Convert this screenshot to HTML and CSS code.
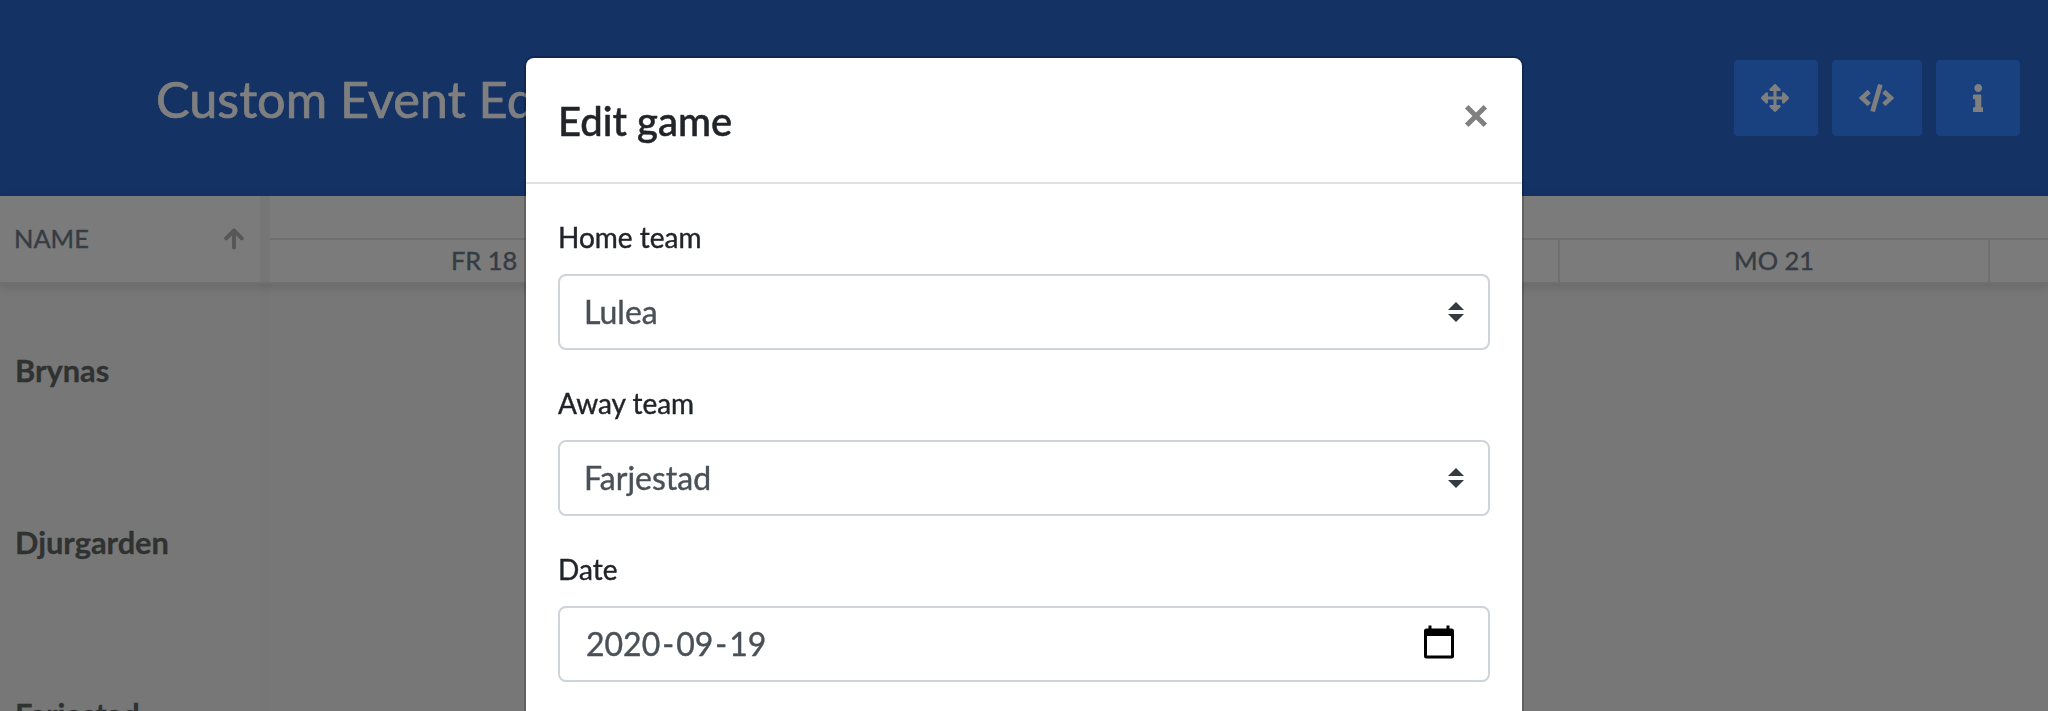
FILE: index.html
```html
<!DOCTYPE html>
<html lang="en">
<head>
<meta charset="utf-8">
<title>Custom Event Editor</title>
<link rel="stylesheet" href="styles.css">
</head>
<body>
<div class="page">
  <header class="topbar">
    <h1 class="topbar-title">Custom Event Editor</h1>
    <div class="tools">
      <button class="tool" aria-label="Fullscreen"><svg width="28" height="28" viewBox="0 0 512 512"><path d="M352.201 425.775l-79.196 79.196c-9.373 9.373-24.568 9.373-33.941 0l-79.196-79.196c-15.119-15.119-4.411-40.971 16.971-40.970h51.162L228 284H127.196v51.162c0 21.382-25.851 32.090-40.971 16.971L7.029 272.937c-9.373-9.373-9.373-24.569 0-33.941L86.225 159.800c15.119-15.119 40.971-4.411 40.971 16.971V228H228V127.196h-51.230c-21.381 0-32.090-25.851-16.971-40.971l79.196-79.196c9.373-9.373 24.568-9.373 33.941 0l79.196 79.196c15.119 15.119 4.411 40.971-16.971 40.971h-51.162V228h100.804v-51.162c0-21.382 25.851-32.090 40.970-16.971l79.196 79.196c9.373 9.373 9.373 24.569 0 33.941L425.773 352.200c-15.119 15.119-40.971 4.411-40.970-16.971V284H284v100.804h51.230c21.382 0 32.090 25.851 16.971 40.971z"/></svg></button>
      <button class="tool tool-wide" aria-label="Code"><svg width="35" height="28" viewBox="0 0 640 512"><path d="M278.9 511.5l-61-17.7c-6.4-1.8-10-8.5-8.2-14.9L346.2 8.7c1.8-6.4 8.5-10 14.9-8.2l61 17.7c6.4 1.8 10 8.5 8.2 14.9L293.8 503.3c-1.9 6.4-8.5 10.1-14.9 8.2zm-114-112.2l43.5-46.4c4.6-4.9 4.3-12.7-.8-17.2L117 256l90.6-79.7c5.1-4.5 5.5-12.3.8-17.2l-43.5-46.4c-4.5-4.8-12.1-5.1-17-.5L3.8 247.2c-5.1 4.7-5.1 12.8 0 17.5l144.1 135.1c4.9 4.6 12.5 4.4 17-.5zm327.2.6l144.1-135.1c5.1-4.7 5.1-12.8 0-17.5L492.1 112.1c-4.8-4.5-12.4-4.3-17 .5L431.6 159c-4.6 4.9-4.3 12.7.8 17.2L523 256l-90.6 79.7c-5.1 4.5-5.5 12.3-.8 17.2l43.5 46.4c4.5 4.9 12.1 5.1 17 .6z"/></svg></button>
      <button class="tool tool-info" aria-label="Info"><svg width="10.5" height="28" viewBox="0 0 192 512"><path d="M20 424.229h20V279.771H20c-11.046 0-20-8.954-20-20V212c0-11.046 8.954-20 20-20h112c11.046 0 20 8.954 20 20v212.229h20c11.046 0 20 8.954 20 20V492c0 11.046-8.954 20-20 20H20c-11.046 0-20-8.954-20-20v-47.771c0-11.046 8.954-20 20-20zM96 0C56.235 0 24 32.235 24 72s32.235 72 72 72 72-32.235 72-72S135.764 0 96 0z"/></svg></button>
    </div>
  </header>
  <main class="scheduler">
    <div class="grid-head">
      <div class="name-head">
        <span class="name-head-text">NAME</span>
        <svg class="sort" width="20" height="22" viewBox="0 0 20 22"><path d="M10 19.500V3M2.200 10.300L10 2.500L17.800 10.300" /></svg>
      </div>
      <div class="splitter-head"></div>
      <div class="timeline-head">
        <div class="weeks"></div>
        <div class="days">
          <div class="day">FR 18</div>
          <div class="day"></div>
          <div class="day"></div>
          <div class="day">MO 21</div>
          <div class="day"></div>
        </div>
      </div>
    </div>
    <div class="grid-body">
      <div class="names">
        <div class="name">Brynas</div>
        <div class="name">Djurgarden</div>
        <div class="name">Farjestad</div>
      </div>
      <div class="splitter"></div>
    </div>
  </main>
</div>
<div class="backdrop">
  <section class="modal" role="dialog" aria-label="Edit game">
    <div class="modal-head">
      <h2 class="modal-title">Edit game</h2>
      <svg class="close" width="24" height="24" viewBox="0 0 24 24"><path d="M2.700 2.700L21.300 21.300M21.300 2.700L2.700 21.300"/></svg>
    </div>
    <div class="modal-body">
      <div class="field">
        <div class="label">Home team</div>
        <div class="control"><span class="value">Lulea</span><svg class="caret" width="16" height="20" viewBox="0 0 16 20"><path d="M0 8L8 0L16 8ZM0 12L8 20L16 12Z"/></svg></div>
      </div>
      <div class="field">
        <div class="label">Away team</div>
        <div class="control"><span class="value">Farjestad</span><svg class="caret" width="16" height="20" viewBox="0 0 16 20"><path d="M0 8L8 0L16 8ZM0 12L8 20L16 12Z"/></svg></div>
      </div>
      <div class="field">
        <div class="label">Date</div>
        <div class="control date"><span class="value date-text"><span class="part">2020</span>-<span class="part">09</span>-<span class="part">19</span></span><svg class="calendar" width="30" height="34" viewBox="0 0 30 34"><path fill-rule="evenodd" d="M4.500 0.500H7.500V3.500H22.500V0.500H25.500V3.500H27.500Q30 3.500 30 6V31Q30 33.500 27.500 33.500H2.500Q0 33.500 0 31V6Q0 3.500 2.500 3.500H4.500ZM3 11V30.500H27V11Z"/></svg></div>
      </div>
    </div>
  </section>
</div>
</body>
</html>
```
FILE: styles.css
```css
* { box-sizing: border-box; }
html, body { margin: 0; height: 100%; overflow: hidden; }
body { font-family: Lato, "Noto Sans", sans-serif; background: #efefef; }
svg { display: block; flex: none; }

.page { height: 711px; overflow: hidden; }
.topbar {
  display: flex; justify-content: space-between; align-items: flex-start;
  height: 196px; padding: 60px 28px 0 156px; background: #2864c8;
}
.topbar-title {
  margin: 9px 0 0; font-size: 50.4px; line-height: 60px; font-weight: 400; color: #fff;
  -webkit-text-stroke: .7px #fff;
}
.tools { display: flex; gap: 14px; }
.tool {
  display: flex; align-items: center; justify-content: center;
  width: 84px; height: 76px; padding: 0 2px 0 0; border: 0; border-radius: 4px; background: #3280fe;
}
.tool-wide { width: 90px; }
.tool-info { padding: 0; }
.tool svg { fill: #fff; }

.grid-head {
  position: relative; display: flex; height: 88px; background: #f6f6f6;
  border-bottom: 2px solid #dcdede; box-shadow: 0 4px 10px rgba(0, 0, 0, .12);
}
.name-head {
  display: flex; align-items: center; justify-content: space-between;
  width: 260px; padding: 0 16px 0 14px; font-size: 25.4px; color: #6a7886;
  -webkit-text-stroke: .4px #6a7886;
}
.name-head-text { padding-bottom: 2px; }
.sort { fill: none; stroke: #aeaeb0; stroke-width: 4; stroke-linecap: round; stroke-linejoin: round; }
.splitter-head { width: 10px; background: #ececec; }
.timeline-head { flex: 1; min-width: 0; overflow: hidden; }
.weeks { height: 44px; border-bottom: 2px solid #dcdede; }
.days { display: flex; height: 42px; }
.day {
  flex: none; width: 430px; border-right: 2px solid #dcdede;
  text-align: center; font-size: 25.4px; line-height: 40px; color: #6a7886;
  -webkit-text-stroke: .4px #6a7886;
}
.grid-body { display: flex; }
.names { width: 260px; }
.name {
  display: flex; align-items: center; height: 172px; padding-left: 15px;
  font-size: 30.800px; font-weight: 700; color: #606462;
  -webkit-text-stroke: .3px #606462;
}
.splitter { width: 10px; background: #ededed; }

.backdrop {
  position: fixed; inset: 0; display: flex; justify-content: center; align-items: flex-start;
  padding-top: 56px; overflow: hidden; background: rgba(0, 0, 0, .5);
}
.modal {
  flex: none; width: 1000px; height: 900px; background: #fff; background-clip: padding-box;
  border: 2px solid rgba(0, 0, 0, .2); border-radius: 10px;
}
.modal-head {
  display: flex; justify-content: space-between; align-items: flex-start;
  height: 126px; padding: 32px 34px 0 32px; border-bottom: 2px solid #dee2e6;
}
.modal-title {
  margin: 1px 0 0; font-size: 40px; line-height: 60px; font-weight: 500; color: #212529;
  -webkit-text-stroke: .5px #212529;
}
.close { margin-top: 14px; fill: none; stroke: #808080; stroke-width: 5; }
.modal-body { padding: 32px; }
.field { height: 166px; }
.label {
  height: 58px; font-size: 28px; line-height: 42px; color: #212529;
  -webkit-text-stroke: .4px #212529;
}
.control {
  display: flex; align-items: center; justify-content: space-between;
  height: 76px; padding: 0 24px; border: 2px solid #ced4da; border-radius: 8px;
  font-size: 32px; color: #495057; -webkit-text-stroke: .4px #495057;
}
.value { padding-bottom: 2px; }
.caret { fill: #343a40; }
.calendar { margin-bottom: 4px; }
.date { padding-right: 34px; }
.date-text { display: flex; }
.part { padding: 0 2px; }
```
